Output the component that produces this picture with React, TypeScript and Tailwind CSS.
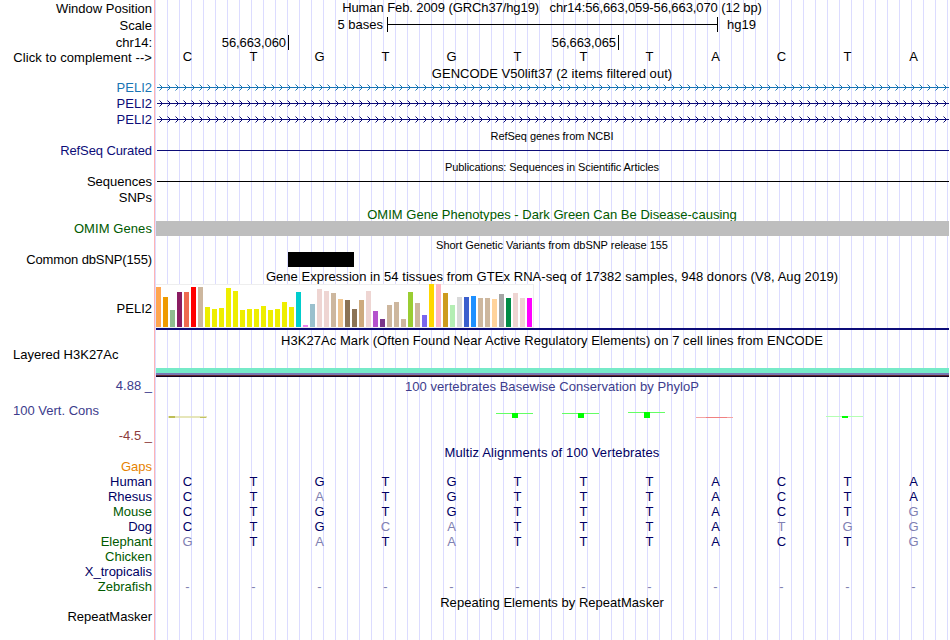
import type { ReactNode } from 'react'
import clsx from 'clsx'

// ---------------------------------------------------------------
// Track data
// ---------------------------------------------------------------

const REFERENCE = 'CTGTGTTTACTA'

// [height in px, tissue colour]
const GTEX_BARS: [number, string][] = [
  [40, '#ffa54f'], [30, '#ee9a00'], [17, '#8fbc8f'], [35, '#8b1c62'], [35, '#ee6a50'], [40, '#ff0000'],
  [40, '#cdb79e'], [20, '#eeee00'], [18, '#eeee00'], [19, '#eeee00'], [39, '#eeee00'], [36, '#eeee00'],
  [17, '#eeee00'], [18, '#eeee00'], [18, '#eeee00'], [21, '#eeee00'], [17, '#eeee00'], [18, '#eeee00'],
  [25, '#eeee00'], [20, '#eeee00'], [35, '#00cdcd'], [2, '#ee82ee'], [23, '#9ac0cd'], [38, '#eed5d2'],
  [36, '#eed5d2'], [34, '#cdb79e'], [28, '#eec591'], [27, '#8b7355'], [18, '#8b7355'], [27, '#cdaa7d'],
  [36, '#eed5d2'], [16, '#b452cd'], [8, '#7a378b'], [22, '#cdb79e'], [25, '#cdb79e'], [8, '#cdb79e'],
  [35, '#9acd32'], [24, '#cdb79e'], [12, '#7a67ee'], [43, '#ffd700'], [43, '#ffb6c1'], [34, '#cd9b1d'],
  [22, '#b4eeb4'], [30, '#d9d9d9'], [30, '#3a5fcd'], [31, '#1e90ff'], [29, '#cdb79e'], [29, '#cdb79e'],
  [28, '#ffd39b'], [33, '#a6a6a6'], [29, '#008b45'], [34, '#eed5d2'], [29, '#eed5d2'], [29, '#ff00ff'],
]

const SPECIES = [
  { name: 'Human', bases: 'CTGTGTTTACTA', color: 'text-[#000064]' },
  { name: 'Rhesus', bases: 'CTATGTTTACTA', color: 'text-[#000064]' },
  { name: 'Mouse', bases: 'CTGTGTTTACTG', color: 'text-[#005a00]' },
  { name: 'Dog', bases: 'CTGCATTTATGG', color: 'text-[#000064]' },
  { name: 'Elephant', bases: 'GTATATTTACTG', color: 'text-[#005a00]' },
  { name: 'Chicken', bases: '', color: 'text-[#005a00]' },
  { name: 'X_tropicalis', bases: '', color: 'text-[#000064]' },
  { name: 'Zebrafish', bases: '------------', color: 'text-[#005a00]' },
]

// ---------------------------------------------------------------
// Building blocks
// ---------------------------------------------------------------

type RowProps = {
  height: string
  label?: ReactNode
  labelClass?: string
  children?: ReactNode
}

function Row({ height, label, labelClass, children }: RowProps) {
  return (
    <div className={clsx('flex', height)}>
      <div className={clsx('w-[155px] shrink-0 border-r border-[#ffb4b4] bg-white pr-[2px] text-right', labelClass)}>
        {label}
      </div>
      <div className="w-[794px] shrink-0">{children}</div>
    </div>
  )
}

function Title({ children, className }: { children: ReactNode; className?: string }) {
  return <div className={clsx('text-center', className)}>{children}</div>
}

function Bases({ bases, compare = false }: { bases: string; compare?: boolean }) {
  return (
    <div className="-ml-[0.5px] grid w-[792px] grid-cols-12 text-center">
      {bases.split('').map((base, i) => (
        <span key={i} className={compare ? (base === REFERENCE[i] ? 'text-[#000064]' : 'text-[#8080b2]') : 'text-black'}>
          {base}
        </span>
      ))}
    </div>
  )
}

function Intron({ id, color }: { id: string; color: string }) {
  return (
    <svg className={clsx('ml-[2px] block', color)} width="792" height="15" shapeRendering="crispEdges">
      <defs>
        <pattern id={id} width="8" height="15" patternUnits="userSpaceOnUse">
          <path d="M5 7h1v1h-1zM4 6h1v1h-1zM4 8h1v1h-1zM3 5h1v1h-1zM3 9h1v1h-1z" fill="currentColor" />
          <path d="M2 4h1v1h-1zM2 10h1v1h-1z" fill="currentColor" opacity="0.5" />
        </pattern>
      </defs>
      <rect width="792" height="15" fill={`url(#${id})`} />
      <rect y="7" width="792" height="1" fill="currentColor" />
    </svg>
  )
}

function GtexGraph() {
  return (
    <div className="ml-px">
      <div className="flex h-[44px] w-[378px] items-end gap-[2px] border-t border-r border-b border-[#eeeeee] bg-white">
        {GTEX_BARS.map(([height, color], i) => (
          <div key={i} className="w-[5px] shrink-0" style={{ height, backgroundColor: color }} />
        ))}
      </div>
      <div className="h-[2px] bg-[#0c0c78]" />
    </div>
  )
}

function Conservation() {
  return (
    <svg className="block" width="794" height="50" shapeRendering="crispEdges">
      <rect x="13" y="38" width="39" height="2" fill="#e0e0a8" opacity="0.8" />
      <rect x="14" y="38" width="6" height="2" fill="#b4b43c" opacity="0.8" />
      <rect x="45" y="39" width="6" height="1" fill="#b4b43c" opacity="0.7" />
      {[341, 407, 473].map((x, i) => (
        <g key={x}>
          <rect x={x} y={i === 2 ? 34 : 35} width="37" height="1" fill="#64ff64" />
          <rect x={x + 16} y={i === 2 ? 34 : 35} width="6" height={i === 2 ? 6 : 5} fill="#00ff00" />
        </g>
      ))}
      <rect x="541" y="39" width="37" height="1" fill="#f4a4a4" />
      <rect x="551" y="39" width="21" height="1" fill="#f08080" />
      <rect x="671" y="38" width="37" height="1" fill="#b4ffb4" />
      <rect x="687" y="38" width="6" height="2" fill="#00ff00" />
    </svg>
  )
}

// ---------------------------------------------------------------
// Genome browser
// ---------------------------------------------------------------

export default function App() {
  return (
    <div className="h-[640px] w-[950px] overflow-hidden bg-white bg-[linear-gradient(to_right,#dcdcff_1px,transparent_1px)] bg-[length:12px_100%] bg-[position:11px_0] font-['Liberation_Sans',Arial,sans-serif] text-[13px] leading-[15px] whitespace-pre text-black">
      <Row height="h-[17px]" label="Window Position" labelClass="pt-px">
        <Title className="tracking-[-0.09px]">
          {'Human Feb. 2009 (GRCh37/hg19)   chr14:56,663,059-56,663,070 (12 bp)'}
        </Title>
      </Row>
      <Row height="h-[17px]" label="Scale" labelClass="pt-px">
        <div className="flex">
          <span className="w-[228px] text-right">5 bases</span>
          <div className="ml-[4px] flex h-[15px] w-[331px] items-center border-x border-black">
            <div className="h-px w-full bg-black" />
          </div>
          <span className="ml-[9px]">hg19</span>
        </div>
      </Row>
      <Row height="h-[16px]" label="chr14:" labelClass="pt-px">
        <div className="flex pt-px tracking-[-0.08px]">
          <span className="w-[134px] border-r border-black pr-[2px] text-right">56,663,060</span>
          <span className="w-[330px] border-r border-black pr-[2px] text-right">56,663,065</span>
        </div>
      </Row>
      <Row height="h-[16px]" label="Click to complement -->" labelClass="tracking-[0.08px]">
        <div className="-mt-px">
          <Bases bases={REFERENCE} />
        </div>
      </Row>

      {/* Genes */}
      <Row height="h-[14px]">
        <Title className="tracking-[0.05px]">GENCODE V50lift37 (2 items filtered out)</Title>
      </Row>
      <Row height="h-[16px]" label="PELI2" labelClass="text-[#1874b4]">
        <Intron id="intron-1" color="text-[#1874b4]" />
      </Row>
      <Row height="h-[16px]" label="PELI2" labelClass="text-[#0c0c78]">
        <Intron id="intron-2" color="text-[#0c0c78]" />
      </Row>
      <Row height="h-[16px]" label="PELI2" labelClass="text-[#0c0c78]">
        <Intron id="intron-3" color="text-[#0c0c78]" />
      </Row>
      <Row height="h-[15px]">
        <Title className="pt-px text-[11px] tracking-[-0.05px]">RefSeq genes from NCBI</Title>
      </Row>
      <Row height="h-[16px]" label="RefSeq Curated" labelClass="tracking-[-0.1px] text-[#0c0c78]">
        <div className="mt-[7px] ml-[2px] h-px bg-[#0c0c78]" />
      </Row>
      <Row height="h-[15px]">
        <Title className="pt-px text-[11px] tracking-[-0.08px]">Publications: Sequences in Scientific Articles</Title>
      </Row>
      <Row height="h-[16px]" label="Sequences">
        <div className="mt-[7px] ml-[2px] h-px bg-black" />
      </Row>
      <Row height="h-[16px]" label="SNPs" />

      {/* Phenotypes and variants */}
      <Row height="h-[15px]">
        <Title className="pt-px tracking-[0.02px] text-[#005a00]">
          OMIM Gene Phenotypes - Dark Green Can Be Disease-causing
        </Title>
      </Row>
      <Row height="h-[16px]" label="OMIM Genes" labelClass="tracking-[0.08px] text-[#005a00]">
        <div className="relative ml-px h-[15px] bg-[#bebebe]" />
      </Row>
      <Row height="h-[15px]">
        <Title className="pt-px text-[11px] tracking-[-0.03px]">Short Genetic Variants from dbSNP release 155</Title>
      </Row>
      <Row height="h-[16px]" label="Common dbSNP(155)" labelClass="tracking-[-0.12px]">
        <div className="ml-[133px] h-[15px] w-[66px] bg-black" />
      </Row>

      {/* Expression and regulation */}
      <Row height="h-[16px]">
        <Title className="pt-px tracking-[0.055px]">
          Gene Expression in 54 tissues from GTEx RNA-seq of 17382 samples, 948 donors (V8, Aug 2019)
        </Title>
      </Row>
      <Row height="h-[47px]" label="PELI2" labelClass="pt-[17px]">
        <GtexGraph />
      </Row>
      <Row height="h-[16px]">
        <Title className="pt-[2px] tracking-[0.05px]">
          H3K27Ac Mark (Often Found Near Active Regulatory Elements) on 7 cell lines from ENCODE
        </Title>
      </Row>
      <Row height="h-[31px]" label={<div className="pl-[13px] text-left">Layered H3K27Ac</div>}>
        <div className="ml-px pt-[21px]">
          <div className="h-[5px] bg-[#76eac8]" />
          <div className="h-[2px] bg-[#7878b4]" />
          <div className="h-px bg-[#602830]" />
          <div className="h-px bg-[#100020]" />
        </div>
      </Row>

      {/* Conservation */}
      <Row
        height="h-[66px]"
        labelClass="text-[#3c3c8c]"
        label={
          <div className="flex flex-col gap-[10px]">
            <span>4.88 _</span>
            <span className="pl-[13px] text-left">100 Vert. Cons</span>
            <span className="text-[#8c3c3c]">-4.5 _</span>
          </div>
        }
      >
        <Title className="pt-px tracking-[0.04px] text-[#3c3c8c]">100 vertebrates Basewise Conservation by PhyloP</Title>
        <div className="-mt-[16px]">
          <Conservation />
        </div>
      </Row>
      <Row height="h-[15px]">
        <Title className="pt-px tracking-[0.11px] text-[#000064]">Multiz Alignments of 100 Vertebrates</Title>
      </Row>
      <Row height="h-[15px]" label="Gaps" labelClass="text-[#e68200]" />
      {SPECIES.map(({ name, bases, color }) => (
        <Row key={name} height="h-[15px]" label={name} labelClass={color}>
          <Bases bases={bases} compare />
        </Row>
      ))}
      <Row height="h-[15px]">
        <Title className="pt-px tracking-[0.03px]">Repeating Elements by RepeatMasker</Title>
      </Row>
      <Row height="h-[31px]" label="RepeatMasker" />
    </div>
  )
}
